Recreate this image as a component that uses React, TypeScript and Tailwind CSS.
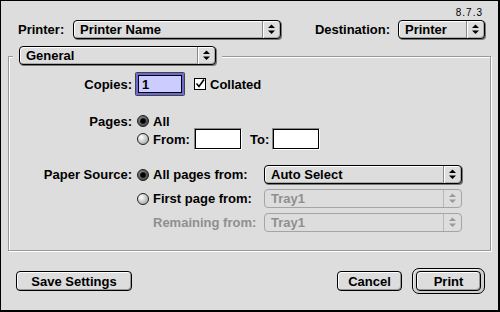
import React from "react";

// Mac OS 9 style print dialog (Platinum appearance)

function Arrows({ disabled }: { disabled?: boolean }) {
  const fill = disabled ? "#9a9a9a" : "#000";
  return (
    <svg width="7" height="11" viewBox="0 0 7 11">
      <polygon points="0,4 3.5,0.5 7,4" fill={fill} />
      <polygon points="0,6.5 7,6.5 3.5,10" fill={fill} />
    </svg>
  );
}

function Popup({ label, width, disabled }: { label: string; width: string; disabled?: boolean }) {
  return (
    <div
      className={
        disabled
          ? `flex h-[19px] ${width} rounded-[4px] border border-[#a4a4a4] bg-[#dddddd] text-[#8f8f8f]`
          : `flex h-[19px] ${width} rounded-[4px] border border-black bg-[#dddddd] shadow-[1px_1px_0_#777,inset_1px_1px_0_#fff,inset_-1px_-1px_0_#aaa]`
      }
    >
      <div className="flex flex-1 items-center overflow-hidden whitespace-nowrap pl-[6px] leading-none">{label}</div>
      <div
        className={
          disabled
            ? "flex w-[18px] items-center justify-center border-l border-[#b8b8b8]"
            : "flex w-[18px] items-center justify-center border-l border-[#888] shadow-[inset_1px_0_0_#fff]"
        }
      >
        <Arrows disabled={disabled} />
      </div>
    </div>
  );
}

function Radio({ on }: { on?: boolean }) {
  return (
    <svg width="12" height="12" viewBox="0 0 12 12" className="shrink-0">
      <defs>
        <radialGradient id={on ? "rOn" : "rOff"} cx="35%" cy="35%" r="70%">
          <stop offset="0%" stopColor={on ? "#8a8a8a" : "#ffffff"} />
          <stop offset="100%" stopColor={on ? "#444" : "#a8a8a8"} />
        </radialGradient>
      </defs>
      <circle cx="6" cy="6" r="5.5" fill={`url(#${on ? "rOn" : "rOff"})`} stroke="#222" strokeWidth="1" />
      {on && <circle cx="6" cy="6" r="2.8" fill="#000" />}
    </svg>
  );
}

function Check() {
  return (
    <svg width="12" height="12" viewBox="0 0 12 12" className="shrink-0">
      <rect x="0.5" y="0.5" width="11" height="11" fill="#fff" stroke="#000" />
      <path d="M2.5 5.5 L5 8.5 L10 1.5" fill="none" stroke="#000" strokeWidth="1.6" />
    </svg>
  );
}

function Field({ width }: { width: string }) {
  return (
    <div className={`h-[22px] ${width} border border-[#888] border-r-white border-b-white`}>
      <div className="h-full w-full border border-black bg-white" />
    </div>
  );
}

function Button({ children, width }: { children: React.ReactNode; width: string }) {
  return (
    <div
      className={`flex h-[20px] ${width} items-center justify-center rounded-[4px] border border-black bg-[#dddddd] leading-none shadow-[inset_1px_1px_0_#fff,inset_-1px_-1px_0_#999]`}
    >
      {children}
    </div>
  );
}

export default function App() {
  return (
    <div className="flex h-[312px] w-[500px] flex-col border-t border-l border-r-2 border-b-2 border-black bg-[#dddddd] font-['Liberation_Sans',Arial,sans-serif] text-[13px] font-bold text-black">
      {/* version */}
      <div className="flex h-[18px] items-end justify-end pr-[15px] pb-[1px] text-[10px] font-normal leading-none tracking-[1px]">
        8.7.3
      </div>

      {/* printer / destination row */}
      <div className="flex h-[21px] items-center pr-[13px]">
        <div className="ml-[17px] w-[55px] leading-none">Printer:</div>
        <Popup label="Printer Name" width="w-[208px]" />
        <div className="flex-1" />
        <div className="mr-[8px] leading-none">Destination:</div>
        <Popup label="Printer" width="w-[87px]" />
      </div>

      {/* group box */}
      <div className="relative mt-[16px] ml-[7px] h-[195px] w-[483px] border border-[#999] shadow-[inset_1px_1px_0_#fff,1px_1px_0_#fff]">
        <div className="absolute top-[-11px] left-[4px] bg-[#dddddd] px-[6px]">
          <Popup label="General" width="w-[197px]" />
        </div>

        <div className="flex flex-col pt-[16px]">
          {/* copies */}
          <div className="flex h-[22px] items-center">
            <div className="w-[123px] text-right leading-none">Copies:</div>
            <div className="ml-[4px] h-[22px] w-[48px] rounded-[1px] border-2 border-[#6a6ad4] shadow-[0_0_0_1px_#444]">
              <div className="flex h-full w-full items-center border border-black bg-[#ccccff] pl-[3px] leading-none">1</div>
            </div>
            <div className="ml-[10px] flex items-center">
              <Check />
              <span className="ml-[4px] leading-none">Collated</span>
            </div>
          </div>

          {/* pages */}
          <div className="mt-[19px] flex h-[14px] items-center">
            <div className="w-[123px] text-right leading-none">Pages:</div>
            <div className="ml-[5px] flex items-center">
              <Radio on />
              <span className="ml-[4px] leading-none">All</span>
            </div>
          </div>
          <div className="flex h-[22px] items-center">
            <div className="w-[128px]" />
            <Radio />
            <span className="ml-[4px] w-[41px] leading-none">From:</span>
            <Field width="w-[48px]" />
            <span className="ml-[8px] w-[22px] leading-none">To:</span>
            <Field width="w-[48px]" />
          </div>

          {/* paper source */}
          <div className="mt-[15px] flex h-[19px] items-center">
            <div className="w-[123px] text-right leading-none">Paper Source:</div>
            <div className="ml-[5px] flex w-[127px] items-center">
              <Radio on />
              <span className="ml-[4px] leading-none">All pages from:</span>
            </div>
            <Popup label="Auto Select" width="w-[198px]" />
          </div>
          <div className="mt-[5px] flex h-[19px] items-center">
            <div className="w-[128px]" />
            <div className="flex w-[127px] items-center">
              <Radio />
              <span className="ml-[4px] leading-none">First page from:</span>
            </div>
            <Popup label="Tray1" width="w-[198px]" disabled />
          </div>
          <div className="mt-[5px] flex h-[19px] items-center">
            <div className="w-[128px]" />
            <div className="flex w-[127px] items-center pl-[16px] leading-none text-[#8f8f8f]">Remaining from:</div>
            <Popup label="Tray1" width="w-[198px]" disabled />
          </div>
        </div>
      </div>

      {/* buttons */}
      <div className="mt-[17px] flex h-[26px] items-center pr-[13px]">
        <div className="ml-[15px]">
          <Button width="w-[116px]">Save Settings</Button>
        </div>
        <div className="flex-1" />
        <Button width="w-[65px]">Cancel</Button>
        <div className="ml-[10px] rounded-[7px] border border-black bg-[#cfcfcf] px-[3px] py-[2px] shadow-[inset_1px_1px_0_#eee]">
          <Button width="w-[65px]">Print</Button>
        </div>
      </div>
    </div>
  );
}
